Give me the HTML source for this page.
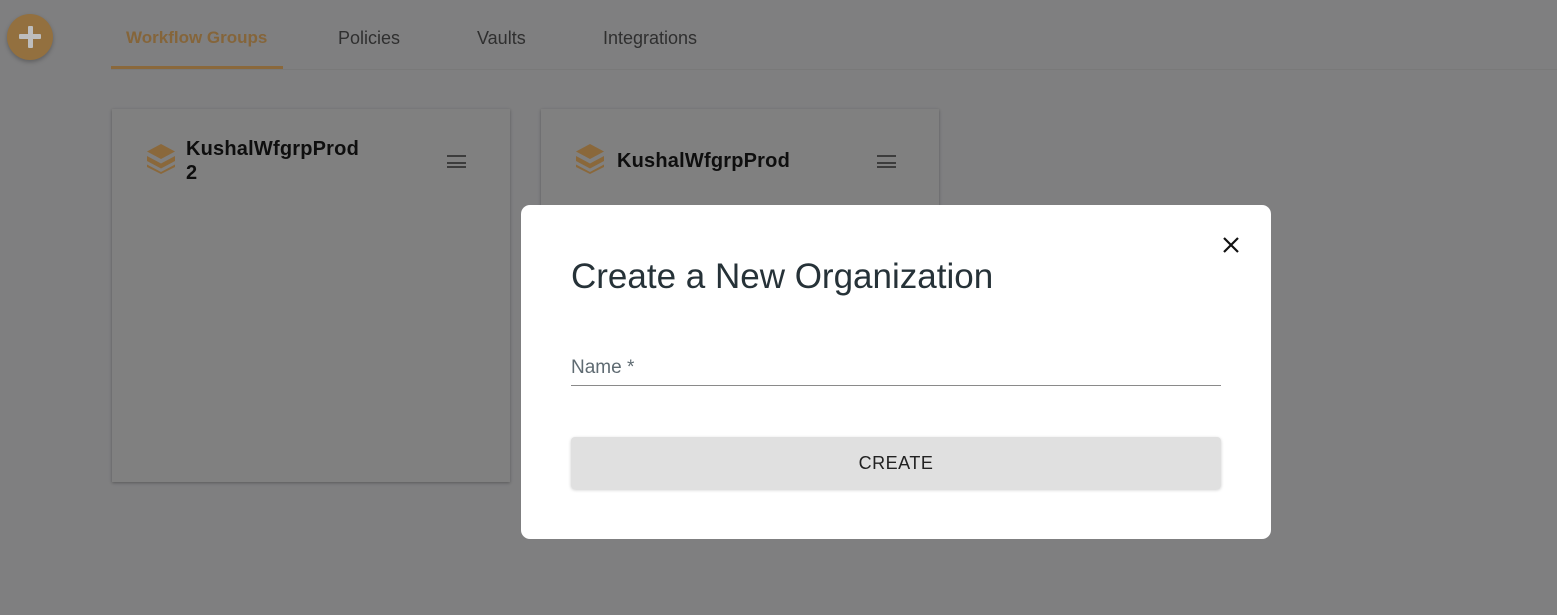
<!DOCTYPE html>
<html><head><meta charset="utf-8"><style>
body{margin:0;width:1557px;height:615px;background:#7f7f80;font-family:"Liberation Sans",sans-serif;position:relative;overflow:hidden}
.fab{position:absolute;left:7px;top:14px;width:46px;height:46px;border-radius:50%;background:#93703f;box-shadow:0 2px 4px rgba(0,0,0,.25)}
.fab:before{content:"";position:absolute;left:12px;top:20px;width:22px;height:5px;background:#bdbdbd;border-radius:1px}
.fab:after{content:"";position:absolute;left:20.5px;top:12px;width:5px;height:22px;background:#bdbdbd;border-radius:1px}
.tabs{position:absolute;left:111px;top:0;right:0;height:69px;border-bottom:1px solid #797979}
.tab{position:absolute;top:28px;font-size:18px;color:#2f2f2f}
.ul{position:absolute;left:111px;top:66px;width:172px;height:3px;background:#8a683b}
.card{position:absolute;top:109px;width:398px;height:373px;background:#808080;box-shadow:0 1px 3px rgba(0,0,0,.3)}
.ttl{position:absolute;font-size:20px;color:#0e0e0e;line-height:24px;font-weight:bold;letter-spacing:.2px}
.menu{position:absolute;width:19px;height:13px;border-top:2px solid #3c3c3c;border-bottom:2px solid #3c3c3c;box-sizing:border-box}
.menu:after{content:"";position:absolute;left:0;right:0;top:4.5px;height:2px;background:#3c3c3c}
.dlg{position:absolute;left:521px;top:205px;width:750px;height:334px;background:#fff;border-radius:9px}
</style></head><body>
<div class="fab"></div>
<div class="tabs"></div>
<div class="tab" style="left:126px;color:#85653a;font-weight:bold;font-size:17px">Workflow Groups</div>
<div class="tab" style="left:338px">Policies</div>
<div class="tab" style="left:477px">Vaults</div>
<div class="tab" style="left:603px">Integrations</div>
<div class="ul"></div>
<div class="card" style="left:112px">
<svg style="position:absolute;left:34px;top:34px" width="30" height="32" viewBox="0 0 30 32"><path d="M15 1 L29 8.5 L15 16 L1 8.5Z M1 13 L15 20.5 L29 13 L29 18 L15 25.5 L1 18Z M1 21.5 L15 29 L29 21.5 L29 24 L15 31 L1 24Z" fill="#8a683b"/></svg>
<div class="ttl" style="left:74px;top:28px">KushalWfgrpProd<br>2</div>
<div class="menu" style="left:335px;top:46px"></div>
</div>
<div class="card" style="left:541px">
<svg style="position:absolute;left:34px;top:34px" width="30" height="32" viewBox="0 0 30 32"><path d="M15 1 L29 8.5 L15 16 L1 8.5Z M1 13 L15 20.5 L29 13 L29 18 L15 25.5 L1 18Z M1 21.5 L15 29 L29 21.5 L29 24 L15 31 L1 24Z" fill="#8a683b"/></svg>
<div class="ttl" style="left:76px;top:40px">KushalWfgrpProd</div>
<div class="menu" style="left:336px;top:46px"></div>
</div>
<div class="dlg">
<svg style="position:absolute;left:701px;top:31px" width="18" height="18" viewBox="0 0 18 18"><path d="M2 2L16 16M16 2L2 16" stroke="#111" stroke-width="2.2"/></svg>
<div style="position:absolute;left:50px;top:52px;font-size:35px;color:#263238">Create a New Organization</div>
<div style="position:absolute;left:50px;top:152px;font-size:19px;color:#5f6b72">Name *</div>
<div style="position:absolute;left:50px;top:180px;width:650px;height:1px;background:#8a8a8a"></div>
<div style="position:absolute;left:50px;top:232px;width:650px;height:52px;background:#e0e0e0;border-radius:4px;box-shadow:0 1px 3px rgba(0,0,0,.2);text-align:center;line-height:52px;font-size:18px;color:#222;letter-spacing:.5px">CREATE</div>
</div>
</body></html>
